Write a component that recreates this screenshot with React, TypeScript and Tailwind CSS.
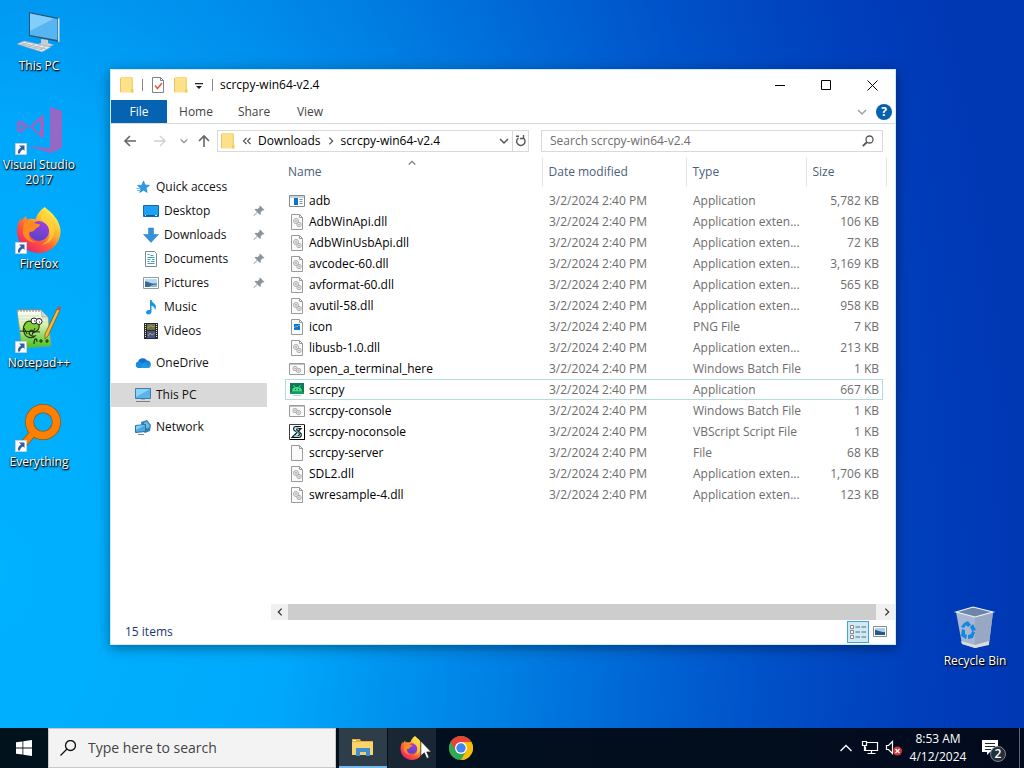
import { useState, type ReactNode } from "react";

type IconName =
  | "app" | "dll" | "png" | "bat" | "android" | "vbs" | "blank"
  | "star" | "desktop" | "download" | "document" | "picture" | "music" | "video"
  | "cloud" | "pc" | "network";

const DATE = "3/2/2024 2:40 PM";

const FILES: { name: string; icon: IconName; type: string; size: string }[] = [
  { name: "adb", icon: "app", type: "Application", size: "5,782 KB" },
  { name: "AdbWinApi.dll", icon: "dll", type: "Application exten...", size: "106 KB" },
  { name: "AdbWinUsbApi.dll", icon: "dll", type: "Application exten...", size: "72 KB" },
  { name: "avcodec-60.dll", icon: "dll", type: "Application exten...", size: "3,169 KB" },
  { name: "avformat-60.dll", icon: "dll", type: "Application exten...", size: "565 KB" },
  { name: "avutil-58.dll", icon: "dll", type: "Application exten...", size: "958 KB" },
  { name: "icon", icon: "png", type: "PNG File", size: "7 KB" },
  { name: "libusb-1.0.dll", icon: "dll", type: "Application exten...", size: "213 KB" },
  { name: "open_a_terminal_here", icon: "bat", type: "Windows Batch File", size: "1 KB" },
  { name: "scrcpy", icon: "android", type: "Application", size: "667 KB" },
  { name: "scrcpy-console", icon: "bat", type: "Windows Batch File", size: "1 KB" },
  { name: "scrcpy-noconsole", icon: "vbs", type: "VBScript Script File", size: "1 KB" },
  { name: "scrcpy-server", icon: "blank", type: "File", size: "68 KB" },
  { name: "SDL2.dll", icon: "dll", type: "Application exten...", size: "1,706 KB" },
  { name: "swresample-4.dll", icon: "dll", type: "Application exten...", size: "123 KB" },
];

const QUICK: { name: string; icon: IconName; pinned?: boolean }[] = [
  { name: "Desktop", icon: "desktop", pinned: true },
  { name: "Downloads", icon: "download", pinned: true },
  { name: "Documents", icon: "document", pinned: true },
  { name: "Pictures", icon: "picture", pinned: true },
  { name: "Music", icon: "music" },
  { name: "Videos", icon: "video" },
];

const ROOTS: { name: string; icon: IconName }[] = [
  { name: "OneDrive", icon: "cloud" },
  { name: "This PC", icon: "pc" },
  { name: "Network", icon: "network" },
];

const page = <path d="M2.500.5h8l3 3v12h-11z" fill="#fafafa" stroke="#9a9a9a" />;
const pageFold = <path d="M10.500.5v3h3" fill="none" stroke="#9a9a9a" />;

const ICONS: Record<IconName, ReactNode> = {
  app: (
    <>
      <path d="M.5 2.500h15v11H.5z" fill="#fff" stroke="#7f8b96" />
      <path d="M1 3h14v2H1z" fill="#c9d4dc" />
      <path d="M5 5h4v7H5z" fill="#0c74c9" />
      <path d="M10.500 6.500h3M10.500 8.500h3M10.500 10.500h3" stroke="#7f8b96" />
    </>
  ),
  dll: (
    <>
      {page}
      {pageFold}
      <g fill="#ececec" stroke="#a6a6a6" strokeWidth=".9">
        <circle cx="7" cy="7" r="2.500" />
        <circle cx="10" cy="10.500" r="2.200" />
        <circle cx="7" cy="7" r=".6" />
        <circle cx="10" cy="10.500" r=".5" />
      </g>
    </>
  ),
  png: (
    <>
      {page}
      {pageFold}
      <path d="M5 5h6v6H5z" fill="#1377c8" />
      <path d="M5 9l2-2 1 1 2-2 1 1" fill="none" stroke="#5fb4ee" />
    </>
  ),
  bat: (
    <>
      <path d="M.5 2.500h15v11H.5z" fill="#fafafa" stroke="#9a9a9a" />
      <path d="M1 3.500h14" stroke="#c4c4c4" />
      <g fill="#ececec" stroke="#a6a6a6" strokeWidth=".9">
        <circle cx="6" cy="7.500" r="2.200" />
        <circle cx="9.500" cy="9.500" r="2.200" />
        <circle cx="6" cy="7.500" r=".5" />
        <circle cx="9.500" cy="9.500" r=".5" />
      </g>
    </>
  ),
  android: (
    <>
      <path d="M1 1h14v11H1z" fill="#10775a" />
      <path d="M3 9.500C3 6 5 5 8 5s5 1 5 4.500z" fill="#3ddc84" />
      <path d="M4.500 3l1.500 2.500M11.500 3L10 5.500" stroke="#3ddc84" />
      <path d="M6 7.500h1M9 7.500h1" stroke="#0b5a42" />
      <path d="M1 10h14v2H1z" fill="#14996b" />
      <path d="M4 13.500h8" stroke="#c6ccca" />
    </>
  ),
  vbs: (
    <>
      <path d="M.5.5h15v15H.5z" fill="#fff" stroke="#3d3d3d" />
      <path d="M15.500 1v14.500H1" fill="none" stroke="#000" />
      <path
        d="M12 2.500H7C4 2.500 4 6 6 7l3 1.500c2 1.200 2 3-.5 3.500M3 13.500h6.500c3.500 0 3.500-3.500 1.500-5L8 6.500c-1-1 0-2 2-2h2z"
        fill="#dff6fa"
        stroke="#111"
        strokeWidth="1.200"
      />
      <path d="M6.500 4l3-.2M6.500 6.500l4 3M5 12h4" stroke="#46c4d6" strokeWidth="1.200" />
    </>
  ),
  blank: (
    <>
      {page}
      {pageFold}
    </>
  ),
  star: (
    <>
      <path d="M8.500 2l1.700 4 4.300.3-3.300 2.800 1 4.300-3.700-2.200L4.800 13.500l1-4.200L2.500 6.500l4.300-.3z" fill="#2f9be3" stroke="#1d7fc6" strokeWidth=".6" />
      <path d="M2 11.500h4M1.500 9.500H5" stroke="#5fb5ec" />
    </>
  ),
  desktop: (
    <>
      <path d="M.5 2.500h15v11H.5z" fill="#1ba1f7" stroke="#1667a5" />
      <path d="M1 12.500h14" stroke="#0c5c9c" />
      <path d="M2 12.500h1M12 12.500h2" stroke="#d8efff" />
    </>
  ),
  download: <path d="M5.500 1h5v6.500h5L8 15.500.5 7.500h5z" fill="#3591dd" stroke="#2677bd" strokeWidth=".5" />,
  document: (
    <>
      <path d="M2.500.5h9l2 2v13h-11z" fill="#fff" stroke="#7e8890" />
      <path d="M4.500 3.500h2M7.500 4.500h3M4.500 6.500h7M4.500 8.500h3M9 8.500h2.500M4.500 10.500h2M8 10.500h3.500M4.500 12.500h7" stroke="#3ba0ad" />
    </>
  ),
  picture: (
    <>
      <path d="M.5 2.500h15v11H.5z" fill="#fff" stroke="#8f9aa2" />
      <path d="M2 4h12v8H2z" fill="#b5d9f2" />
      <path d="M2 6.500c3-.5 5 2 8 2h4V12H2z" fill="#36689c" />
      <path d="M6 12c2-2 5-2.500 8-2.500V12z" fill="#8fb6d4" />
    </>
  ),
  music: (
    <path
      d="M7 1h1.500c.3 2.500 4.500 3.500 4.500 7 0 1.200-.4 2-1 3 0-2.500-1.500-3.800-3.500-4.300v6c0 1.600-1.300 2.800-3 2.800S3 14.600 3 13.300s1.300-2.400 2.800-2.400c.4 0 .8.100 1.200.2z"
      fill="#1696e0"
    />
  ),
  video: (
    <>
      <path d="M1 0h14v16H1z" fill="#2b2b2b" />
      <path d="M2.500 1v14M13.500 1v14" stroke="#e7e7e7" strokeDasharray="1 1" />
      <path d="M4 1h8v6H4z" fill="#6a7440" />
      <path d="M4 8h8v7H4z" fill="#46578f" />
      <path d="M4.500 5l3-3 2 2 2-1M5 13l2-3 2 2 2.500-2" fill="none" stroke="#b9a75c" />
    </>
  ),
  cloud: (
    <>
      <path d="M3.500 13A3.200 3.200 0 013 6.800 5 5 0 0112 5.500a3.800 3.800 0 01.8 7.500z" fill="#1272c9" />
      <path d="M3 6.800c2-.4 3.600.4 5 1.400l5 3.800-1 1H3.500A3.200 3.200 0 013 6.800z" fill="#168be0" />
      <path d="M8 8.200c2-1.600 4-1.700 6.200-.7C17 9.500 15.500 13 12.800 13h-7z" fill="#28a8ea" opacity=".55" />
    </>
  ),
  pc: (
    <>
      <path d="M.5 1.500h15v10H.5z" fill="#56b5ef" stroke="#447ca5" />
      <path d="M1 2h14L1 10z" fill="#8dd2f8" />
      <path d="M6 12h4v1H6z" fill="#a9b3ba" />
      <path d="M1 14.500h14" stroke="#758088" />
    </>
  ),
  network: (
    <>
      <path d="M6 3l6-2 4 5-1 6-5 2-3-3z" fill="#2f7fb9" />
      <path d="M9 3.500l3-1 1 2 2 2-2 3-3-1z" fill="#73b9de" />
      <path d="M.5 6.500l10-1v7l-10 1z" fill="#4aa9e2" stroke="#2d6f9f" />
      <path d="M1 7l9-1-9 5z" fill="#8accf2" />
      <path d="M3 15.500h6" stroke="#7c8b95" />
    </>
  ),
};

function Icon({ name }: { name: IconName }) {
  return (
    <svg className="size-4 shrink-0" viewBox="0 0 16 16" aria-hidden="true">
      {ICONS[name]}
    </svg>
  );
}

function Folder() {
  return (
    <svg className="size-4 shrink-0" viewBox="0 0 16 16" aria-hidden="true">
      <path d="M2 0h11l1 1v14H2z" fill="#f3d474" />
      <path d="M1 1h1v14.500L1 15z" fill="#e9c35c" />
      <path d="M2 .5h10.500v11.500l1.500 1V15.500H2z" fill="#fde08a" />
      <path d="M12 12h2.500v3.500H12z" fill="#f0cc66" />
    </svg>
  );
}

function Pin() {
  return (
    <svg className="size-3 shrink-0" viewBox="0 0 12 12" aria-hidden="true">
      <path d="M7 .5L11.500 5l-1 .5-.8-.3-2 2 .2 2-.9.800-2.500-2.500L1 11l-.5-.5L4 7 1.700 4.700l.8-.9 2.200.2 2-2L6.300 1z" fill="#8b939b" />
    </svg>
  );
}

function Chevron({ dir, size = "size-3", color = "#555" }: { dir: "up" | "down" | "left" | "right"; size?: string; color?: string }) {
  const d = {
    up: "M2 8l4-4 4 4",
    down: "M2 4l4 4 4-4",
    left: "M8 2L4 6l4 4",
    right: "M4 2l4 4-4 4",
  }[dir];
  return (
    <svg className={`${size} shrink-0`} viewBox="0 0 12 12" fill="none" stroke={color} strokeWidth="1.500" aria-hidden="true">
      <path d={d} />
    </svg>
  );
}

function FirefoxLogo({ className }: { className: string }) {
  return (
    <svg className={className} viewBox="0 0 48 48" aria-hidden="true">
      <defs>
        <linearGradient id="ffBody" x1=".85" y1=".1" x2=".2" y2=".95">
          <stop offset="0" stopColor="#fff44f" />
          <stop offset=".35" stopColor="#ffb029" />
          <stop offset=".65" stopColor="#ff5a3c" />
          <stop offset="1" stopColor="#e8206e" />
        </linearGradient>
        <linearGradient id="ffGlobe" x1=".6" y1="0" x2=".3" y2="1">
          <stop offset="0" stopColor="#a23ee0" />
          <stop offset="1" stopColor="#5145c4" />
        </linearGradient>
      </defs>
      <path
        d="M30 0c3 3 8 6 11 11 2 2 3 4 3.500 6 2 4 2.500 8 1.500 13-2 10-11 18-22 18C11 48 1 38 1 25c0-6 2-10 4-14 0 2 0 3 .5 4 1-2 3-4 5-6 0 2 .5 3 1 4 3-1 6-1 9 0 1-5 5-10 9.500-13z"
        fill="url(#ffBody)"
      />
      <circle cx="24" cy="25" r="10.500" fill="url(#ffGlobe)" />
      <path d="M11 14c4-1 7 0 9 3 2 1 4 1 5 1 0 3-4 4-5 5-1 2-3 3-6 3-2 5 2 10 8 11-8 1-15-5-15-12 0-4 1-8 4-11z" fill="#ff8a1f" />
      <path d="M28 3c7 5 13 13 12 23-1 8-7 13-13 13 7-3 9-8 8-13 0-4-2-7-5-9-4-3-5-8-2-14z" fill="#ffd43d" opacity=".75" />
    </svg>
  );
}

function ShortcutArrow() {
  return (
    <svg className="absolute bottom-0 left-0 size-3" viewBox="0 0 12 12" aria-hidden="true">
      <path d="M.5.5h11v11H.5z" fill="#fff" stroke="#c8ced4" />
      <path d="M4 2.500h5.500V8L8 6.500C6 7.500 5 9 5 10.500H3C2.500 8 3.500 6 6 4.500z" fill="#2f5fa5" />
    </svg>
  );
}

function ThisPcArt() {
  return (
    <svg className="size-12" viewBox="0 0 48 48" aria-hidden="true">
      <path d="M14 4l30 6v24l-30-6z" fill="#2a5777" />
      <path d="M15 5.500L42.500 11v21L15 27z" fill="#57b5f2" />
      <path d="M15 5.500l24 5L15 23z" fill="#82cdf9" />
      <path d="M43 10l1.500.5V34l-1.500-.3z" fill="#d7dde1" />
      <path d="M26 31l7 1v3l6 2-10 3-8-3 5-2z" fill="#c6ced4" />
      <path d="M9 33l27 6-9 5L2 36z" fill="#e4e8eb" stroke="#95a1aa" strokeWidth=".6" />
      <path d="M7 35l24 6M5 36l23 6M14 34l-7 3.500M20 36l-8 3.500M26 37l-8 4M31 38l-7 4" stroke="#a8b2ba" strokeWidth=".8" />
    </svg>
  );
}

function VisualStudioArt() {
  return (
    <svg className="size-12" viewBox="0 0 48 48" fill="#9468c4" aria-hidden="true">
      <path d="M36 0l11 4v37l-11 5L12 39l23 2V0z" />
      <path fillRule="evenodd" d="M2 15l4-2 8 7 13-12 2 1v21l-2 1-13-12-8 7-4-2zM5 17v6l4-3zM25 14l-7 6 7 6z" />
    </svg>
  );
}

function NotepadArt() {
  return (
    <svg className="size-12" viewBox="0 0 48 48" aria-hidden="true">
      <defs>
        <linearGradient id="noteFade" x1="0" y1="0" x2="0" y2="1">
          <stop offset="0" stopColor="#fff" />
          <stop offset=".35" stopColor="#dff3b4" />
          <stop offset="1" stopColor="#45c21a" />
        </linearGradient>
      </defs>
      <path d="M2 5h24l7 7 3 29-29 2z" fill="url(#noteFade)" stroke="#8e9b8b" strokeWidth=".7" />
      <path d="M26 5l1 7h6z" fill="#cfd9d6" stroke="#8e9b8b" strokeWidth=".6" />
      <path d="M3 3v4M6 3v4M9 3v4M12 3v4M15 3v4M18 3v4M21 3v4M24 3v4" stroke="#7d857f" />
      <path d="M4 11h20M4 14h28M5 17h28" stroke="#c8d6d0" strokeWidth=".7" />
      <path d="M17 17c-6-3-10 4-8 10 1 6 8 7 11 4-5 1-7-3-5-5 2-2 4 0 3 2 5-2 7-4 6-9" fill="#80cf35" stroke="#1f3b17" strokeWidth="1.200" />
      <circle cx="19" cy="16" r="3" fill="#fff" stroke="#222" />
      <circle cx="24" cy="16.500" r="3" fill="#fff" stroke="#222" />
      <path d="M19 16h1M24 17h1M5 26l20 1M9 23l3 6M20 23l-3 7" stroke="#222" strokeWidth="1" />
      <path d="M19 39c0-6 3-7 3-2M24 36h4M26 34v4M30 36h4M32 34v4" fill="none" stroke="#163b0b" strokeWidth="1.200" />
      <path d="M42 4l3 1-12 26-3 3v-5z" fill="#f5b735" stroke="#765019" strokeWidth=".7" />
      <path d="M42 4l1-3 3 1-1 3z" fill="#c84e46" />
    </svg>
  );
}

function EverythingArt() {
  return (
    <svg className="size-12" viewBox="0 0 48 48" fill="none" aria-hidden="true">
      <circle cx="28" cy="18" r="13.500" stroke="#8a5a1d" strokeWidth="9" />
      <path d="M19 28L6 43" stroke="#8a5a1d" strokeWidth="7.500" />
      <path d="M19 28L6 43" stroke="#ff8000" strokeWidth="6" />
      <circle cx="28" cy="18" r="13.500" stroke="#ff8000" strokeWidth="7.500" />
    </svg>
  );
}

function RecycleArt() {
  return (
    <svg className="size-12" viewBox="0 0 48 48" aria-hidden="true">
      <path d="M5 9l17-5 20 5-4 32-14 4-13-4z" fill="#b8c4d6" opacity=".9" />
      <path d="M24 14l18-5-4 32-14 4z" fill="#98a8c2" />
      <path d="M5 9l17-5 20 5-18 5z" fill="#6f85a8" stroke="#eef2f7" strokeWidth="1.200" />
      <path d="M10 38l14 4 14-4v4l-14 3-13-4z" fill="#dcdcdc" />
      <path d="M13 20l4-2 3 4-3 2-2-2-2 3-3-1zM22 21l3 6-4 1-2-4zM24 29l-2 6-5 1v-4l3-1 1-3zM15 36l-5-3 1-7 3 1v4l2 1z" fill="#1687df" />
    </svg>
  );
}

function DesktopIcon({ label, shortcut, children }: { label: string; shortcut?: boolean; children: ReactNode }) {
  return (
    <button
      type="button"
      className="flex w-20 flex-col items-center gap-[2px] text-center text-xs leading-[15px] text-white [text-shadow:0_1px_2px_#000,1px_1px_1px_#000]"
    >
      <span className="relative block">
        {children}
        {shortcut && <ShortcutArrow />}
      </span>
      <span>{label}</span>
    </button>
  );
}

function TitleBar() {
  return (
    <header className="flex h-[30px] items-center pl-2">
      <Folder />
      <span className="mx-[7px] h-3 w-px bg-[#888]" />
      <button type="button" aria-label="Properties">
        <svg className="size-4" viewBox="0 0 16 16" fill="none" aria-hidden="true">
          <path d="M2.500.5h8l3 3v12h-11z" fill="#fff" stroke="#7c838a" />
          <path d="M10.500.5v3h3" stroke="#7c838a" />
          <path d="M5 8.500l2.500 3L12 6" stroke="#d9603f" strokeWidth="1.600" />
        </svg>
      </button>
      <button type="button" aria-label="New folder" className="ml-[7px]">
        <Folder />
      </button>
      <button type="button" aria-label="Customize Quick Access Toolbar" className="ml-1">
        <svg className="size-3" viewBox="0 0 12 12" aria-hidden="true">
          <path d="M2 4h8v1.200H2zM3 7h6L6 10z" fill="#222" />
        </svg>
      </button>
      <span className="mx-[7px] h-3 w-px bg-[#888]" />
      <h1 className="flex-1 text-xs text-black">scrcpy-win64-v2.4</h1>
      <button type="button" aria-label="Minimize" className="flex h-full w-[46px] items-center justify-center">
        <svg className="size-[11px]" viewBox="0 0 11 11" aria-hidden="true"><path d="M0 5.500h10" stroke="#000" /></svg>
      </button>
      <button type="button" aria-label="Maximize" className="flex h-full w-[46px] items-center justify-center">
        <svg className="size-[11px]" viewBox="0 0 11 11" aria-hidden="true"><path d="M.5.5h9v9h-9z" fill="none" stroke="#000" /></svg>
      </button>
      <button type="button" aria-label="Close" className="flex h-full w-[46px] items-center justify-center">
        <svg className="size-[11px]" viewBox="0 0 11 11" aria-hidden="true"><path d="M.5.5l10 10M10.500.5l-10 10" stroke="#000" /></svg>
      </button>
    </header>
  );
}

function Ribbon() {
  return (
    <nav className="flex h-6 items-center border-b border-[#dadbdc] text-xs text-[#444]">
      <button type="button" className="h-full w-14 bg-[#0563b1] text-white">File</button>
      <button type="button" className="w-[58px]">Home</button>
      <button type="button" className="w-[58px]">Share</button>
      <button type="button" className="w-[54px]">View</button>
      <button type="button" aria-label="Expand the Ribbon" className="ml-auto">
        <Chevron dir="down" color="#a0a0a0" />
      </button>
      <button type="button" aria-label="Help" className="mr-[3px] ml-2 size-4 rounded-full bg-[#0560ae] text-center text-xs leading-4 font-bold text-white">
        ?
      </button>
    </nav>
  );
}

function AddressBar() {
  const [query, setQuery] = useState("");
  return (
    <div className="grid grid-cols-[94px_minmax(0,312fr)_minmax(0,354fr)] items-center px-3 py-[6px]">
      <div className="flex items-center justify-between pr-[6px]">
        <button type="button" aria-label="Back">
          <svg className="size-3.5" viewBox="0 0 14 14" fill="none" stroke="#666" strokeWidth="1.600" aria-hidden="true"><path d="M13 7H2M7 2L2 7l5 5" /></svg>
        </button>
        <button type="button" aria-label="Forward" className="ml-2">
          <svg className="size-3.5" viewBox="0 0 14 14" fill="none" stroke="#d0d0d0" strokeWidth="1.400" aria-hidden="true"><path d="M1 7h11M7 2l5 5-5 5" /></svg>
        </button>
        <button type="button" aria-label="Recent locations" className="ml-1">
          <Chevron dir="down" size="size-2.5" color="#888" />
        </button>
        <button type="button" aria-label="Up">
          <svg className="size-3.5" viewBox="0 0 14 14" fill="none" stroke="#666" strokeWidth="1.600" aria-hidden="true"><path d="M7 13V2M2 7l5-5 5 5" /></svg>
        </button>
      </div>
      <div className="flex h-[22px] items-center border border-[#d9d9d9] text-xs text-black">
        <span className="pl-[2px]"><Folder /></span>
        <svg className="ml-[6px] h-3 w-2.5" viewBox="0 0 10 12" fill="none" stroke="#555" strokeWidth="1.200" aria-hidden="true">
          <path d="M4.500 3L1.500 6l3 3M8.500 3l-3 3 3 3" />
        </svg>
        <button type="button" className="ml-[6px]">Downloads</button>
        <span className="mx-[5px]"><Chevron dir="right" size="size-2.5" /></span>
        <button type="button">scrcpy-win64-v2.4</button>
        <button type="button" aria-label="Previous locations" className="mr-[2px] ml-auto">
          <Chevron dir="down" />
        </button>
        <button type="button" aria-label="Refresh" className="flex h-full w-4 items-center justify-center border-l border-[#d9d9d9]">
          <svg className="size-3" viewBox="0 0 12 12" fill="none" stroke="#555" strokeWidth="1.400" aria-hidden="true">
            <path d="M3.500 2.800a4.200 4.200 0 105.500.7M8.500 0v3.500H5M1 1.200h3" />
          </svg>
        </button>
      </div>
      <div className="ml-3 flex h-[22px] items-center border border-[#d9d9d9] px-2">
        <input
          type="search"
          aria-label="Search scrcpy-win64-v2.4"
          value={query}
          onChange={(e) => setQuery(e.target.value)}
          placeholder="Search scrcpy-win64-v2.4"
          className="min-w-0 flex-1 bg-transparent text-xs text-black outline-none placeholder:text-[#6d6d6d]"
        />
        <svg className="size-3" viewBox="0 0 12 12" fill="none" stroke="#555" aria-hidden="true">
          <circle cx="7.500" cy="4.500" r="3.500" strokeWidth="1.300" />
          <path d="M5 7L.8 11.200" strokeWidth="1.800" />
        </svg>
      </div>
    </div>
  );
}

function Sidebar() {
  const [active, setActive] = useState("This PC");
  return (
    <nav className="flex w-[156px] shrink-0 flex-col gap-2 pt-[17px] text-xs text-[#111]">
      <div>
        <a href="#quick" className="flex h-6 items-center gap-[5px] pl-6">
          <Icon name="star" />
          Quick access
        </a>
        {QUICK.map((q) => (
          <a key={q.name} href="#quick" className="flex h-6 items-center gap-[5px] pr-[2px] pl-8">
            <Icon name={q.icon} />
            <span className="flex-1">{q.name}</span>
            {q.pinned && <Pin />}
          </a>
        ))}
      </div>
      {ROOTS.map((r) => (
        <a
          key={r.name}
          href="#root"
          onClick={() => setActive(r.name)}
          className={`flex h-6 items-center gap-[5px] pl-6 ${active === r.name ? "bg-[#d9d9d9]" : ""}`}
        >
          <Icon name={r.icon} />
          {r.name}
        </a>
      ))}
    </nav>
  );
}

function FileTable() {
  const [selected, setSelected] = useState("scrcpy");
  return (
    <div className="min-w-0 flex-1 pr-3 pl-[18px]">
      <table className="w-full table-fixed border-collapse text-left text-xs">
        <colgroup>
          <col />
          <col className="w-36" />
          <col className="w-30" />
          <col className="w-[77px]" />
        </colgroup>
        <thead>
          <tr className="h-7 text-[#4c607a]">
            <th className="relative pl-[3px] font-normal">
              Name
              <span className="absolute top-0 left-1/2 -ml-[6px]">
                <Chevron dir="up" size="size-2.5" color="#777" />
              </span>
            </th>
            <th className="border-l border-[#e5e5e5] pl-[6px] font-normal">Date modified</th>
            <th className="border-l border-[#e5e5e5] pl-[6px] font-normal">Type</th>
            <th className="border-l border-[#e5e5e5] pl-[6px] font-normal">Size</th>
          </tr>
          <tr className="h-1" aria-hidden="true" />
        </thead>
        <tbody>
          {FILES.map((f) => (
            <tr
              key={f.name}
              onClick={() => setSelected(f.name)}
              className={`h-[21px] text-[#6d6d6d] ${selected === f.name ? "outline outline-1 -outline-offset-1 outline-[#b4dcdc]" : ""}`}
            >
              <td className="pl-1 text-black">
                <span className="flex items-center gap-1">
                  <Icon name={f.icon} />
                  {f.name}
                </span>
              </td>
              <td className="pl-[7px]">{DATE}</td>
              <td className="truncate pl-[7px]">{f.type}</td>
              <td className="pr-1 text-right whitespace-nowrap">{f.size}</td>
            </tr>
          ))}
        </tbody>
      </table>
    </div>
  );
}

function StatusBar() {
  return (
    <footer className="flex h-6 items-center pr-1 pl-[14px] text-xs text-[#1e3570]">
      <span className="flex-1">15 items</span>
      <button type="button" aria-label="Details view" className="flex h-[22px] w-[22px] items-center justify-center border border-[#42a5c9] bg-[#cdeaf6]">
        <svg className="size-4" viewBox="0 0 16 16" fill="none" aria-hidden="true">
          <path d="M.5 1.500h3v3h-3zM.5 6.500h3v3h-3zM.5 11.500h3v3h-3z" fill="#fff" stroke="#8d8286" />
          <path d="M5.500 3H10M5.500 8H10M5.500 13H10M11.500 3H16M11.500 8H16M11.500 13H16" stroke="#596a78" />
        </svg>
      </button>
      <button type="button" aria-label="Large icons view" className="flex h-[22px] w-[22px] items-center justify-center">
        <svg className="size-4" viewBox="0 0 16 16" aria-hidden="true">
          <path d="M1.500 2.500h13v10h-13z" fill="#fff" stroke="#7f8b95" />
          <path d="M3 4h10v7H3z" fill="#a9cfec" />
          <path d="M3 6c3 0 4 2 10 2v3H3z" fill="#2c5780" />
        </svg>
      </button>
    </footer>
  );
}

function ExplorerWindow() {
  return (
    <section
      aria-label="scrcpy-win64-v2.4"
      className="absolute top-[69px] left-[110px] flex h-[576px] w-[786px] flex-col border border-[#c9ecf8] bg-white shadow-[0_3px_12px_rgba(0,0,0,0.4)]"
    >
      <TitleBar />
      <Ribbon />
      <AddressBar />
      <div className="flex min-h-0 flex-1">
        <Sidebar />
        <div className="flex min-w-0 flex-1 flex-col">
          <div className="flex flex-1">
            <FileTable />
            <div className="-ml-[9px] h-7 w-[9px] border-l border-[#e5e5e5]" />
          </div>
          <div className="ml-1 flex h-4 items-center bg-[#f0f0f0]">
            <button type="button" aria-label="Scroll left" className="flex w-[17px] justify-center">
              <Chevron dir="left" size="size-2.5" color="#333" />
            </button>
            <div className="h-full flex-1 bg-[#cdcdcd]" />
            <button type="button" aria-label="Scroll right" className="ml-[2px] flex w-[17px] justify-center">
              <Chevron dir="right" size="size-2.5" color="#333" />
            </button>
          </div>
        </div>
      </div>
      <StatusBar />
    </section>
  );
}

function Taskbar() {
  return (
    <footer className="relative flex h-10 items-stretch bg-linear-to-r from-[#02121d] to-[#020b1e] text-white">
      <button type="button" aria-label="Start" className="flex w-12 items-center justify-center">
        <svg className="size-4" viewBox="0 0 16 16" fill="#fff" aria-hidden="true">
          <path d="M0 2.300l6.500-.9v6.200H0zM7.300 1.300L16 0v7.600H7.300zM0 8.400h6.500v6.200L0 13.700zM7.300 8.400H16V16l-8.700-1.300z" />
        </svg>
      </button>
      <div className="flex w-72 items-center gap-3 border border-[#c9c9c9] bg-[#f3f3f3] pl-[11px]">
        <svg className="size-4" viewBox="0 0 16 16" fill="none" stroke="#111" strokeWidth="1.300" aria-hidden="true">
          <circle cx="10.500" cy="5.500" r="5" />
          <path d="M7 9L.5 15.500" />
        </svg>
        <input
          type="search"
          aria-label="Type here to search"
          placeholder="Type here to search"
          className="min-w-0 flex-1 bg-transparent text-sm text-black outline-none placeholder:text-[#444]"
        />
      </div>
      <div className="ml-[3px] flex gap-px">
        <button type="button" aria-label="File Explorer" className="flex w-12 items-center justify-center border-b-2 border-[#76b9ed] bg-[#2d3d49]">
          <svg className="h-5 w-6" viewBox="0 0 24 20" aria-hidden="true">
            <path d="M1 2h8l1 2h12v14H1z" fill="#e9ab3b" />
            <path d="M1 5h21v13H1z" fill="#fcd36b" />
            <path d="M2 3h3v1H2z" fill="#fff" />
            <path d="M5 11h14v8h-4v-4H9v4H5z" fill="#3d8fd1" />
            <path d="M9 15h6v3H9z" fill="#f4ce72" />
          </svg>
        </button>
        <button type="button" aria-label="Firefox" className="flex w-12 items-center justify-center bg-[#182733]">
          <FirefoxLogo className="size-6" />
        </button>
        <button type="button" aria-label="Google Chrome" className="flex w-12 items-center justify-center">
          <svg className="size-6" viewBox="0 0 24 24" aria-hidden="true">
            <circle cx="12" cy="12" r="12" fill="#34a853" />
            <path d="M1.600 6A12 12 0 0122.400 6L12 6.500 6.800 15z" fill="#ea4335" />
            <path d="M22.400 6A12 12 0 0112 24l5.200-9L12 6z" fill="#fbbc04" />
            <path d="M1.600 6L6.800 15A6 6 0 0012 18l-3 5.600A12 12 0 011.600 6z" fill="#34a853" />
            <circle cx="12" cy="12" r="6" fill="#fff" />
            <circle cx="12" cy="12" r="4.700" fill="#4285f4" />
          </svg>
        </button>
      </div>
      <div className="ml-auto flex items-center">
        <button type="button" aria-label="Show hidden icons">
          <svg className="size-3.5" viewBox="0 0 14 14" fill="none" stroke="#fff" strokeWidth="1.300" aria-hidden="true"><path d="M1.500 10L7 4.500l5.500 5.500" /></svg>
        </button>
        <button type="button" aria-label="Network" className="ml-2">
          <svg className="size-[18px]" viewBox="0 0 18 18" fill="none" stroke="#fff" aria-hidden="true">
            <path d="M5.500 3.500h11v8h-12v-4M1.500 2.500h4v4h-4zM3.500 6.500v5h2M10.500 11.500v3M6.500 14.500h8" strokeWidth="1.200" />
          </svg>
        </button>
        <button type="button" aria-label="Volume muted" className="ml-[6px]">
          <svg className="size-[18px]" viewBox="0 0 18 18" fill="none" aria-hidden="true">
            <path d="M1.500 6.500h2l4-4v12l-4-4h-2z" stroke="#fff" strokeWidth="1.200" />
            <circle cx="12.500" cy="12" r="4.500" fill="#cf3535" />
            <path d="M10.500 10l4 4M14.500 10l-4 4" stroke="#fff" strokeWidth="1.300" />
          </svg>
        </button>
        <button type="button" className="w-[70px] text-center text-xs leading-[18px]">
          8:53 AM
          <br />
          4/12/2024
        </button>
        <button type="button" aria-label="2 new notifications" className="relative ml-2">
          <svg className="h-7 w-7" viewBox="0 0 28 28" aria-hidden="true">
            <path d="M1 6h16v12H9l-3 3v-3H1z" fill="#fff" />
            <path d="M4 9.500h10M4 12.500h10M4 15.500h6" stroke="#1b2733" />
            <circle cx="17" cy="20" r="7.500" fill="#23303c" stroke="#7c858c" />
          </svg>
          <span className="absolute right-[7px] bottom-0 w-2 text-center text-xs leading-4 font-semibold">2</span>
        </button>
        <span className="ml-[10px] h-full w-[5px] border-l border-[#5b6572]" />
      </div>
      <svg className="absolute top-3 left-[420px] h-5 w-3" viewBox="0 0 12 20" aria-hidden="true">
        <path d="M.8 1v15l3.500-3.200L6.800 18.500l2.400-1L6.800 12h4.500z" fill="#fff" stroke="#222" strokeWidth=".8" />
      </svg>
    </footer>
  );
}

export default function App() {
  return (
    <div className="flex min-h-screen flex-col overflow-hidden bg-[radial-gradient(100%_210%_at_0%_75%,#00b2ff_0%,#00a8fb_28%,#0094ef_38%,#0080e3_49%,#006bd7_60%,#0052c9_74%,#0040bd_88%,#0037b3_100%)] font-['Open_Sans','Noto_Sans',sans-serif]">
      <main className="relative flex-1">
        <div className="grid w-[78px] auto-rows-[99px] justify-center pt-2">
          <DesktopIcon label="This PC"><ThisPcArt /></DesktopIcon>
          <DesktopIcon label="Visual Studio 2017" shortcut><VisualStudioArt /></DesktopIcon>
          <DesktopIcon label="Firefox" shortcut><FirefoxLogo className="size-12 p-px" /></DesktopIcon>
          <DesktopIcon label="Notepad++" shortcut><NotepadArt /></DesktopIcon>
          <DesktopIcon label="Everything" shortcut><EverythingArt /></DesktopIcon>
        </div>
        <div className="absolute right-[9px] bottom-[60px]">
          <DesktopIcon label="Recycle Bin"><RecycleArt /></DesktopIcon>
        </div>
        <ExplorerWindow />
      </main>
      <Taskbar />
    </div>
  );
}
